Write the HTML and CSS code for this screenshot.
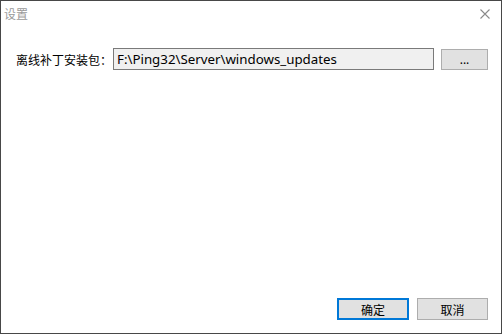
FILE: index.html
```html
<!DOCTYPE html>
<html>
<head>
<meta charset="utf-8">
<link rel="stylesheet" href="styles.css">
</head>
<body>
<div class="window">
  <div class="titlebar">
    <span class="title">设置</span>
    <span class="close">
      <svg width="10" height="10" viewBox="0 0 10 10"><path d="M0.5 0.5L9.5 9.5M9.5 0.5L0.5 9.5" stroke="#8a8a8a" stroke-width="1.1" fill="none"/></svg>
    </span>
  </div>
  <div class="content">
    <div class="row">
      <span class="label">离线补丁安装包：</span>
      <div class="field">F:\Ping32\Server\windows_updates</div>
      <button class="btn browse">...</button>
    </div>
  </div>
  <div class="footer">
    <button class="btn primary">确定</button>
    <button class="btn">取消</button>
  </div>
</div>
</body>
</html>
```
FILE: styles.css
```css
html, body {
  margin: 0;
  padding: 0;
  background: #fff;
}
.window {
  box-sizing: border-box;
  width: 502px;
  height: 334px;
  border: 1px solid #474747;
  background: #fff;
  display: flex;
  flex-direction: column;
  font-family: "Noto Sans CJK SC", "Noto Sans", sans-serif;
  font-size: 12px;
  color: #000;
}
.titlebar {
  height: 29px;
  display: flex;
  align-items: center;
  justify-content: space-between;
  padding: 0 11px 0 3px;
}
.title {
  color: #9a9a9a;
  font-size: 12px;
  line-height: 14px;
  margin-top: -4px;
}
.close {
  display: flex;
  margin-top: -4px;
}
.content {
  flex: 1;
  padding: 18px 0 0 15px;
}
.row {
  display: flex;
  align-items: center;
  height: 22px;
}
.label {
  width: 97px;
  white-space: nowrap;
}
.field {
  box-sizing: border-box;
  width: 321px;
  height: 22px;
  border: 1px solid #7a7a7a;
  background: #f0f0f0;
  padding: 0 3px;
  line-height: 20px;
  font-family: "Noto Sans", "Noto Sans CJK SC", sans-serif;
  font-size: 13.3px;
}
.btn {
  box-sizing: border-box;
  height: 22px;
  border: 1px solid #adadad;
  background: #e1e1e1;
  font-family: "Noto Sans CJK SC", sans-serif;
  font-size: 12px;
  color: #000;
  padding: 0;
}
.browse {
  width: 47px;
  height: 21px;
  margin-left: 7px;
  font-family: "Noto Sans", sans-serif;
}
.footer {
  display: flex;
  justify-content: flex-end;
  gap: 8px;
  padding: 0 13px 13px 0;
}
.footer .btn {
  width: 71px;
}
.primary {
  border: 2px solid #0078d7;
  width: 72px !important;
}
```
